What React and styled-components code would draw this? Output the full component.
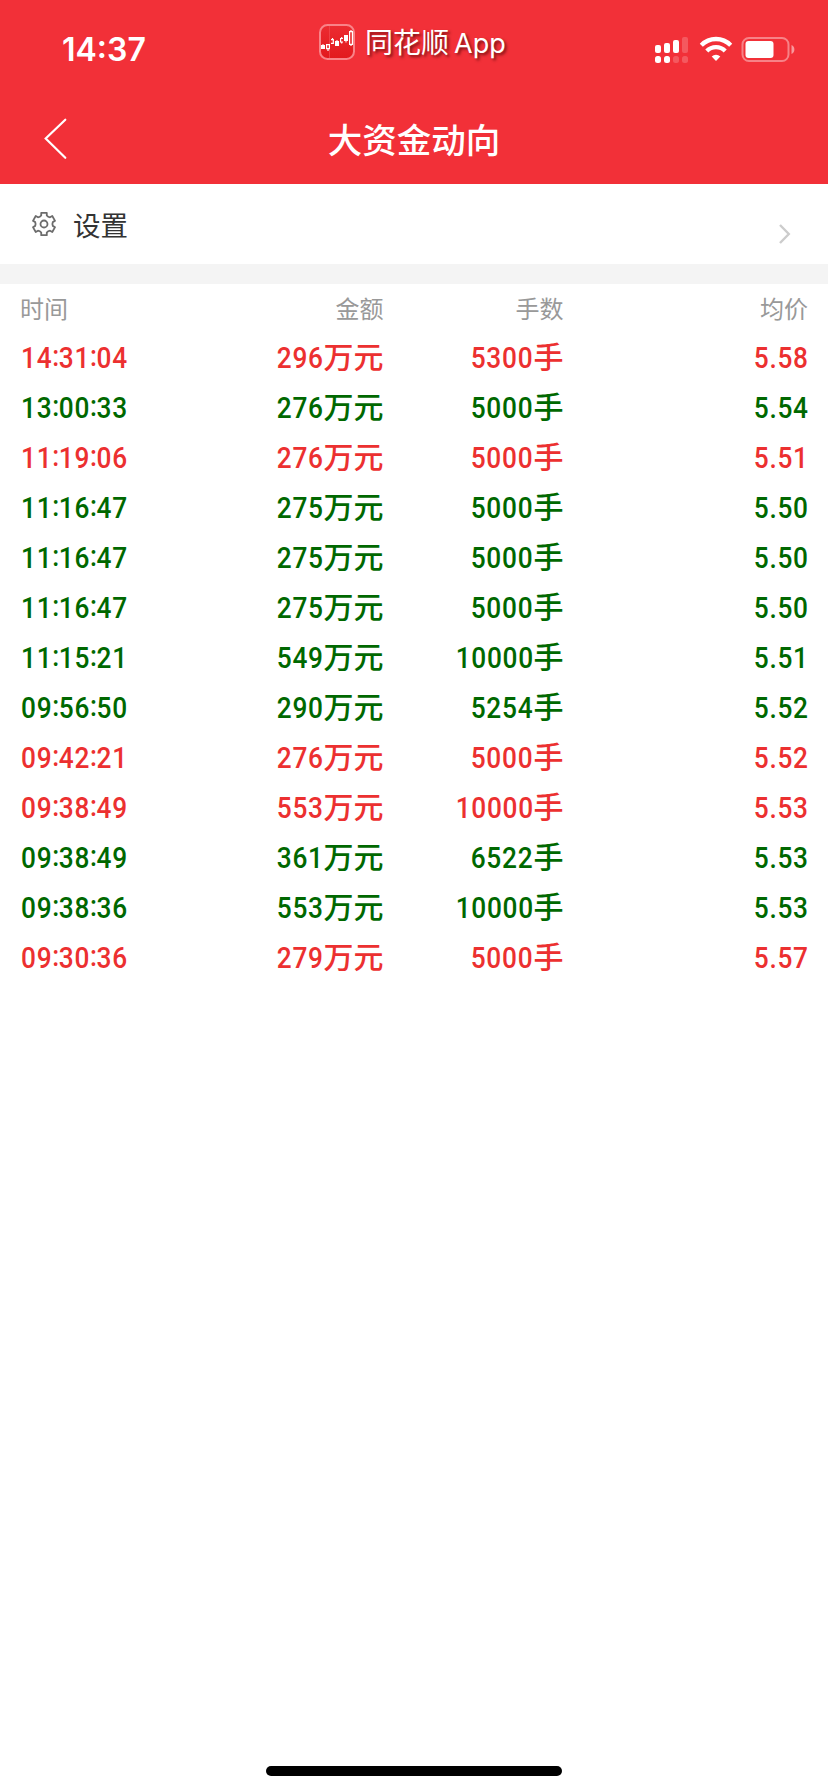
import React from 'react'
import styled, { createGlobalStyle } from 'styled-components'

const CJK = `'Noto Sans CJK SC', sans-serif`

const GlobalStyle = createGlobalStyle`
  body {
    margin: 0;
    background: #fff;
    font-family: ${CJK};
  }
`

const Page = styled.div`
  width: 828px;
  height: 1792px;
  overflow: hidden;

  display: flex;
  flex-direction: column;
`

const Header = styled.header`
  height: 184px;
  color: #fff;
  background: #f23038;
`

const StatusBar = styled.div`
  height: 94px;
  padding: 0 33px 0 62px;
  box-sizing: border-box;

  display: grid;
  grid-template-columns: 257px 1fr auto;
  align-items: start;
`

const Clock = styled.div`
  padding-top: 30px;
  font-family: Inter, sans-serif;
  font-size: 32px;
  font-weight: 600;
  line-height: 40px;
`

const AppBadge = styled.div`
  padding-top: 24px;

  display: flex;
  gap: 10px;
`

const AppName = styled.div`
  font-size: 28px;
  line-height: 34px;
  white-space: nowrap;
  text-shadow: 2px 2px 3px rgba(60, 0, 0, 0.65);
`

const AppSuffix = styled.span`
  margin-left: 5px;
  font-family: Inter, sans-serif;
  font-size: 27px;
`

const StatusIcons = styled.div`
  padding-top: 36px;

  display: flex;
`

const NavBar = styled.div`
  height: 89px;
  padding: 0 44px;

  display: grid;
  grid-template-columns: 60px 1fr 60px;
  align-items: center;
`

const Title = styled.h1`
  margin: 0 0 1px;
  font-size: 34.5px;
  font-weight: 500;
  line-height: 50px;
  text-align: center;
`

const SettingsRow = styled.div`
  height: 80px;
  padding: 0 37px 0 31px;
  box-sizing: border-box;

  display: flex;
  align-items: center;
`

const SettingsLabel = styled.div`
  flex: 1;
  padding-left: 16px;
  font-size: 27.5px;
  line-height: 40px;
  color: #333;
`

const Arrow = styled.svg`
  margin-top: 19px;
`

const Separator = styled.div`
  height: 20px;
  background: #f4f4f4;
`

const Row = styled.div`
  height: ${props => (props.isHead ? 46 : 50)}px;
  padding: 0 20px;

  display: grid;
  grid-template-columns: 170px 193.5px 180px 1fr;
  align-items: start;

  font-size: ${props => (props.isHead ? 24 : 30)}px;
  font-weight: ${props => (props.isHead ? 400 : 500)};
  line-height: ${props => (props.isHead ? 48 : 50)}px;
  color: ${props => props.color};
`

const Cell = styled.div`
  white-space: nowrap;
  text-align: ${props => (props.isFirst ? 'left' : 'right')};
`

// narrowed towards the side the column is aligned to
const Digits = styled.span`
  display: inline-block;
  margin: 0 ${props => (props.isLast ? -1 : 0)}px 0 ${props => (props.isLeft ? 0.5 : 0)}px;
  font-family: Roboto, sans-serif;
  font-size: 29.5px;
  font-weight: 550;
  letter-spacing: 0.8px;
  transform: scaleX(0.89);
  transform-origin: ${props => (props.isLeft ? 'left' : 'right')};
`

const Colon = styled.span`
  line-height: 1;
  vertical-align: 2.5px;
  letter-spacing: -0.5px;
`

const HomeArea = styled.div`
  margin-top: auto;
  padding-bottom: 16px;

  display: flex;
  justify-content: center;
`

const HomeBar = styled.div`
  width: 296px;
  height: 10px;
  border-radius: 5px;
  background: #000;
`

const RED = '#ec3030'
const GREEN = '#006800'

const trades = [
  ['14:31:04', 296, 5300, '5.58', RED],
  ['13:00:33', 276, 5000, '5.54', GREEN],
  ['11:19:06', 276, 5000, '5.51', RED],
  ['11:16:47', 275, 5000, '5.50', GREEN],
  ['11:16:47', 275, 5000, '5.50', GREEN],
  ['11:16:47', 275, 5000, '5.50', GREEN],
  ['11:15:21', 549, 10000, '5.51', GREEN],
  ['09:56:50', 290, 5254, '5.52', GREEN],
  ['09:42:21', 276, 5000, '5.52', RED],
  ['09:38:49', 553, 10000, '5.53', RED],
  ['09:38:49', 361, 6522, '5.53', GREEN],
  ['09:38:36', 553, 10000, '5.53', GREEN],
  ['09:30:36', 279, 5000, '5.57', RED],
]

const AppIcon = () => (
  <svg width="36" height="36" viewBox="0 0 36 36">
    <defs>
      <linearGradient id="app-icon" x1="0" y1="0" x2="0" y2="1">
        <stop offset="0" stopColor="#ec2c32" />
        <stop offset="1" stopColor="#e2191d" />
      </linearGradient>
    </defs>
    <rect x="1" y="1" width="34" height="34" rx="7.5" fill="url(#app-icon)" stroke="#f98388" strokeWidth="2" />
    <path d="M10.500 2v32" stroke="#f0484c" strokeWidth="0.8" />
    <g fill="#fff">
      <path d="M2 21h4v4H2zM16 17h4v5h-4zM25 11h4v6h-4zM3.500 20h1v1h-1zM17.500 16h1v1h-1zM26.500 17h1v1.500h-1z" />
    </g>
    <g fill="none" stroke="#fff" strokeWidth="1.200">
      <path d="M7.600 20.600h2.800v4H7.600zM9 24.600v2.400M12 15.600h2.300v3.800H12M13.500 14v1.600M24 14.500h-2.400v3.500H24M22.700 13v1.500M22.700 18v1.500M30.600 7.600h2.800V20.400h-2.800zM32 6v1.600M32 20.400V22" />
    </g>
  </svg>
)

const StatusGlyphs = () => (
  <svg width="140" height="28" viewBox="0 0 140 28">
    <g fill="#fff">
      <rect x="0" y="9" width="6" height="8" rx="2" />
      <rect x="9" y="7" width="6" height="10" rx="2" />
      <rect x="18" y="4" width="6" height="13" rx="2" />
      <rect x="27" y="1" width="6" height="16" rx="2" opacity="0.2" />
      <rect x="0" y="20" width="6" height="7" rx="2.500" />
      <rect x="9" y="20" width="6" height="7" rx="2.500" />
      <rect x="18" y="20" width="6" height="7" rx="2.500" opacity="0.2" />
      <rect x="27" y="20" width="6" height="7" rx="2.500" opacity="0.2" />
    </g>
    <g fill="none" stroke="#fff" strokeWidth="4.300">
      <path d="M46.300 9.200a20.500 20.500 0 0 1 29.400 0" />
      <path d="M51.800 15a12.800 12.800 0 0 1 18.400 0" />
    </g>
    <path d="M56.700 20.500a6.500 6.500 0 0 1 8.600 0L61 25z" fill="#fff" />
    <rect x="87.500" y="2" width="46" height="23" rx="6.500" fill="none" stroke="#fff" strokeWidth="2" opacity="0.4" />
    <rect x="90.500" y="5" width="28" height="17" rx="3" fill="#fff" />
    <path d="M136.500 9c3.800 1.500 3.800 7.500 0 9z" fill="#fff" opacity="0.5" />
  </svg>
)

const BackIcon = () => (
  <svg width="24" height="42" viewBox="0 0 24 42" fill="none" stroke="#fff" strokeWidth="2.200">
    <path d="M21.300 1.700L1.700 20.500l19.600 19.300" strokeLinecap="round" />
  </svg>
)

const gearPoint = (angle, radius) => {
  const rad = ((angle - 90) * Math.PI) / 180
  return `${(13 + radius * Math.cos(rad)).toFixed(2)} ${(13 + radius * Math.sin(rad)).toFixed(2)}`
}

// six teeth, one every 60 degrees, with a bowed-in edge between each two
const gearPath = [0, 60, 120, 180, 240, 300]
  .map((a, i) => `${i ? 'L' : 'M'}${gearPoint(a - 14, 11.5)}L${gearPoint(a + 14, 11.5)}L${gearPoint(a + 18, 9)}Q${gearPoint(a + 30, 8)} ${gearPoint(a + 42, 9)}`)
  .join('')

const GearIcon = () => (
  <svg width="26" height="26" viewBox="0 0 26 26" fill="none" stroke="#6c6c6c" strokeWidth="1.800" strokeLinejoin="round">
    <path d={`${gearPath}Z`} />
    <circle cx="13" cy="13" r="3.500" />
  </svg>
)

const Time = ({ value }) => {
  const [h, m, s] = value.split(':')
  return (
    <Digits isLeft>
      {h}<Colon>:</Colon>{m}<Colon>:</Colon>{s}
    </Digits>
  )
}

export default () => (
  <Page>
    <GlobalStyle />
    <Header>
      <StatusBar>
        <Clock>14:37</Clock>
        <AppBadge>
          <AppIcon />
          <AppName>同花顺<AppSuffix>App</AppSuffix></AppName>
        </AppBadge>
        <StatusIcons>
          <StatusGlyphs />
        </StatusIcons>
      </StatusBar>
      <NavBar>
        <BackIcon />
        <Title>大资金动向</Title>
      </NavBar>
    </Header>

    <SettingsRow>
      <GearIcon />
      <SettingsLabel>设置</SettingsLabel>
      <Arrow width="13" height="22" viewBox="0 0 13 22" fill="none" stroke="#ccc" strokeWidth="2.400">
        <path d="M2 2l8.800 9L2 20" />
      </Arrow>
    </SettingsRow>
    <Separator />

    <Row isHead color="#999">
      <Cell isFirst>时间</Cell>
      <Cell>金额</Cell>
      <Cell>手数</Cell>
      <Cell>均价</Cell>
    </Row>
    {trades.map(([time, amount, lots, price, color], index) => (
      <Row key={index} color={color}>
        <Cell isFirst>
          <Time value={time} />
        </Cell>
        <Cell><Digits>{amount}</Digits>万元</Cell>
        <Cell><Digits>{lots}</Digits>手</Cell>
        <Cell><Digits isLast>{price}</Digits></Cell>
      </Row>
    ))}

    <HomeArea>
      <HomeBar />
    </HomeArea>
  </Page>
)
